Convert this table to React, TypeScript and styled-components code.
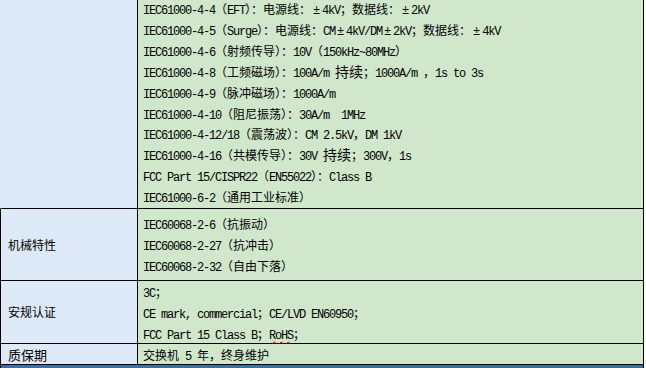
import React from 'react';
import styled, { createGlobalStyle } from 'styled-components';

const Global = createGlobalStyle`
  html, body { margin: 0; padding: 0; background: #ffffff; overflow: hidden; }
  body { font-family: "Noto Sans CJK SC", sans-serif; color: #000000; }
`;

const Page = styled.div`
  width: 646px;
  height: 368px;
  overflow: hidden;
  background: #ffffff;
`;

const Table = styled.div`
  width: 644px;
  display: grid;
  grid-template-columns: 138px 506px;
  margin-top: -1px;
`;

const LabelCell = styled.div<{ $h: number; $open?: boolean; $size?: number }>`
  box-sizing: border-box;
  height: ${(p) => p.$h}px;
  background: #dde9f6;
  border-left: 1px solid ${(p) => (p.$open ? '#dde9f6' : '#000000')};
  border-right: 1px solid #000000;
  border-bottom: 1px solid #000000;
  padding-left: 7px;
  display: flex;
  align-items: center;
  font-family: "Noto Sans CJK SC", sans-serif;
  font-size: ${(p) => p.$size ?? 12}px;
  line-height: 1;
`;

const ValueCell = styled.div<{ $h: number; $size?: number }>`
  box-sizing: border-box;
  height: ${(p) => p.$h}px;
  background: #d0e7cb;
  border-right: 1px solid #000000;
  border-bottom: 1px solid #000000;
  padding-left: 5px;
  display: flex;
  flex-direction: column;
  justify-content: center;
  font-family: "Noto Sans CJK SC", sans-serif;
  font-size: ${(p) => p.$size ?? 12}px;
`;

const Line = styled.div<{ $lh?: number }>`
  flex: none;
  white-space: pre;
  height: ${(p) => p.$lh ?? 21}px;
  line-height: ${(p) => p.$lh ?? 21}px;
  overflow: visible;
`;

const Latin = styled.span`
  font-family: "Liberation Mono", monospace;
  font-size: 12px;
  letter-spacing: -1.2px;
  line-height: 1;
`;

const PlusMinus = styled.span`
  display: inline-block;
  width: 11px;
  text-align: center;
  font-family: "Liberation Mono", monospace;
  font-size: 12px;
  line-height: 1;
`;

const Big = styled.span`
  font-size: 14px;
  line-height: 1;
`;

const Wavy = styled(Latin)`
  text-decoration: underline wavy #e00000;
  text-decoration-thickness: 1px;
  text-underline-offset: 2px;
`;

const NextSection = styled.div`
  grid-column: 1 / -1;
  box-sizing: border-box;
  height: 20px;
  background: #2e74b5;
  border-left: 1px solid #000000;
  border-right: 1px solid #000000;
`;

const HALF = /^[\x20-\x7E]+$/;

function Runs({ text }: { text: string }) {
  const parts = text.split(/([\x20-\x7E]+|±)/);
  return (
    <>
      {parts.map((s, i) => {
        if (s === '') return null;
        if (s === '±') return <PlusMinus key={i}>±</PlusMinus>;
        if (HALF.test(s)) return <Latin key={i}>{s}</Latin>;
        return <React.Fragment key={i}>{s}</React.Fragment>;
      })}
    </>
  );
}

function Mixed({ text }: { text: string }) {
  const parts = text.split(/\{([^}]*)\}/);
  return (
    <>
      {parts.map((s, i) => (i % 2 === 1 ? <Big key={i}>{s}</Big> : <Runs key={i} text={s} />))}
    </>
  );
}

const emc = [
  'IEC61000-4-4（EFT）：电源线：±4kV；数据线：±2kV',
  'IEC61000-4-5（Surge）：电源线：CM±4kV/DM±2kV；数据线：±4kV',
  'IEC61000-4-6（射频传导）：10V（150kHz~80MHz）',
  'IEC61000-4-8（工频磁场）：100A/m {持续}；1000A/m ，1s to 3s',
  'IEC61000-4-9（脉冲磁场）：1000A/m',
  'IEC61000-4-10（阻尼振荡）：30A/m  1MHz',
  'IEC61000-4-12/18（震荡波）：CM 2.5kV，DM 1kV',
  'IEC61000-4-16（共模传导）：30V {持续}；300V，1s',
  'FCC Part 15/CISPR22（EN55022）：Class B',
  'IEC61000-6-2（通用工业标准）',
];

const mech = ['IEC60068-2-6（抗振动）', 'IEC60068-2-27（抗冲击）', 'IEC60068-2-32（自由下落）'];

export default function App() {
  return (
    <Page>
      <Global />
      <Table>
        <LabelCell $h={210} $open />
        <ValueCell $h={210}>
          {emc.map((t) => (
            <Line key={t} $lh={20.9}>
              <Mixed text={t} />
            </Line>
          ))}
        </ValueCell>

        <LabelCell $h={72}>机械特性</LabelCell>
        <ValueCell $h={72}>
          {mech.map((t) => (
            <Line key={t}>
              <Mixed text={t} />
            </Line>
          ))}
        </ValueCell>

        <LabelCell $h={63}>安规认证</LabelCell>
        <ValueCell $h={63}>
          <Line>
            <Mixed text="3C；" />
          </Line>
          <Line>
            <Mixed text="CE mark, commercial；CE/LVD EN60950；" />
          </Line>
          <Line>
            <Mixed text="FCC Part 15 Class B；" />
            <Wavy>RoHS</Wavy>
            <Mixed text="；" />
          </Line>
        </ValueCell>

        <LabelCell $h={21} $size={13}>质保期</LabelCell>
        <ValueCell $h={21}>
          <Line>
            <Mixed text="交换机 5 年，终身维护" />
          </Line>
        </ValueCell>

        <NextSection />
      </Table>
    </Page>
  );
}
